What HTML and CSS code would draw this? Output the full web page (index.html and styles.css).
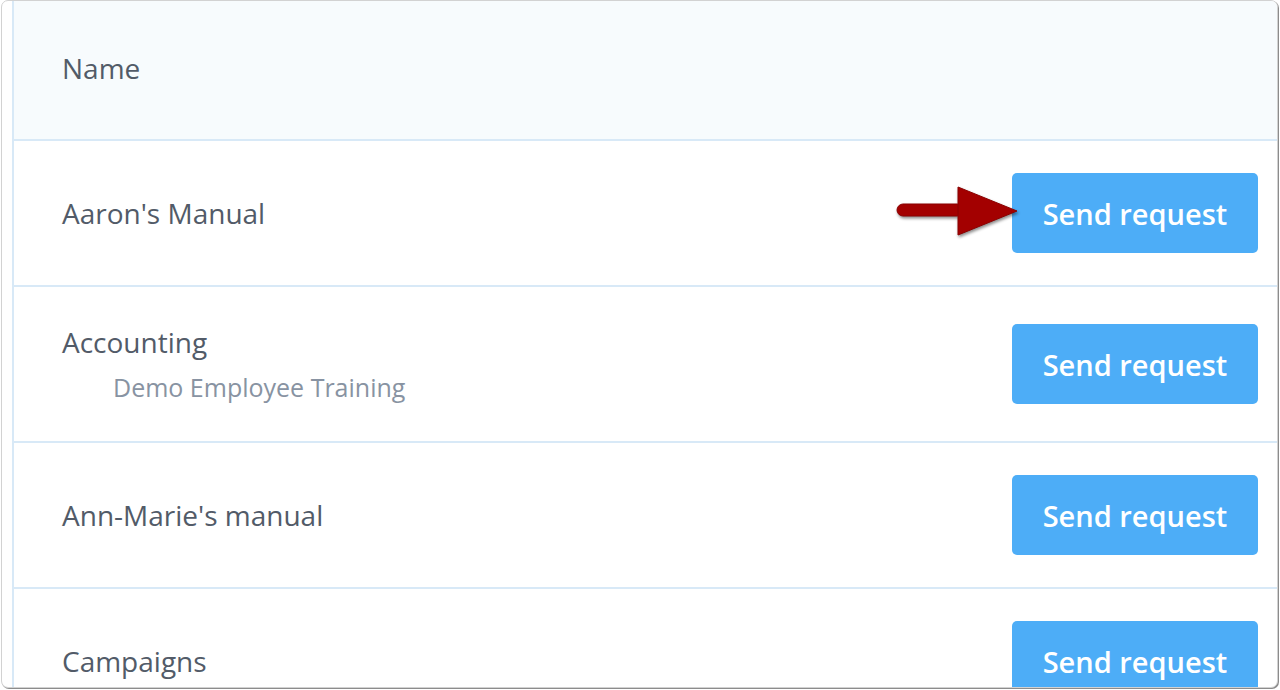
FILE: index.html
```html
<!DOCTYPE html>
<html>
<head>
<meta charset="utf-8">
<link rel="stylesheet" href="styles.css">
</head>
<body>
<div class="frame">
  <div class="table">
    <div class="head">Name</div>
    <div class="row">
      <div class="info"><div class="name">Aaron's Manual</div></div>
      <button class="btn">Send request</button>
    </div>
    <div class="row">
      <div class="info">
        <div class="name">Accounting</div>
        <div class="sub">Demo Employee Training</div>
      </div>
      <button class="btn">Send request</button>
    </div>
    <div class="row">
      <div class="info"><div class="name">Ann-Marie's manual</div></div>
      <button class="btn">Send request</button>
    </div>
    <div class="row">
      <div class="info"><div class="name">Campaigns</div></div>
      <button class="btn">Send request</button>
    </div>
  </div>
</div>
<svg class="arrow" width="140" height="66" viewBox="0 0 140 66">
  <g class="arrow-shape">
    <rect x="7" y="24" width="66" height="12" rx="6" ry="6"/>
    <polygon points="68,7 127,31 68,55"/>
  </g>
</svg>
</body>
</html>
```
FILE: styles.css
```css
html, body {
  margin: 0;
  padding: 0;
}
body {
  width: 1280px;
  height: 690px;
  overflow: hidden;
  background: #ffffff;
  font-family: "Open Sans", "Noto Sans", sans-serif;
  position: relative;
}
.frame {
  box-sizing: border-box;
  margin: 0 2px 0 1px;
  width: 1277px;
  height: 688px;
  border: 1px solid #d2d2d2;
  border-radius: 7px;
  box-shadow: 1px 1px 0 #8c8c8c;
  overflow: hidden;
  padding-left: 10px;
  background: #ffffff;
}
.table {
  border-left: 2px solid #d8e9f7;
  height: 100%;
}
.head {
  height: 140px;
  box-sizing: border-box;
  background: #f7fbfd;
  border-bottom: 2px solid #d8e9f7;
  padding-left: 48px;
  padding-bottom: 4px;
  display: flex;
  align-items: center;
  font-size: 28px;
  color: #525b68;
}
.row {
  display: flex;
  align-items: center;
  justify-content: space-between;
  padding: 32px 19px 32px 48px;
  border-bottom: 2px solid #d8e9f7;
}
.info {
  display: flex;
  flex-direction: column;
}
.name {
  font-size: 28px;
  line-height: 47px;
  color: #525b68;
}
.sub {
  font-size: 25px;
  line-height: 43px;
  color: #8893a2;
  padding-left: 51px;
}
.btn {
  width: 246px;
  height: 80px;
  border: none;
  border-radius: 5px;
  background: #4dadf7;
  color: #ffffff;
  font-family: "Open Sans", "Noto Sans", sans-serif;
  font-weight: 600;
  font-size: 29px;
  padding: 0;
}
.arrow {
  position: absolute;
  left: 890px;
  top: 180px;
}
.arrow-shape {
  fill: #a30000;
  stroke: #8a0000;
  stroke-width: 1;
  filter: drop-shadow(1px 2px 1.5px rgba(0,0,0,0.45));
}
```
